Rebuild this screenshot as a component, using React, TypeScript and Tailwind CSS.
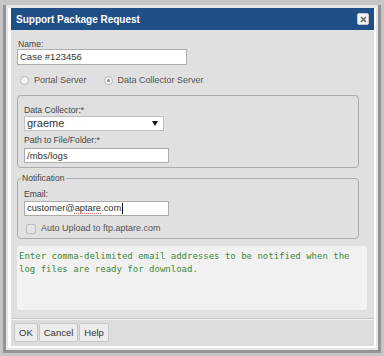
const sans = { fontFamily: '"Liberation Sans", Arial, sans-serif' };

function Radio({ checked, label }: { checked?: boolean; label: string }) {
  return (
    <div className="flex items-center gap-[5px]">
      <span className="flex h-[9px] w-[9px] items-center justify-center rounded-full border border-[#b4b4b4] bg-[#f4f4f4]">
        {checked && <span className="h-[3px] w-[3px] rounded-full bg-[#8a8a8a]" />}
      </span>
      <span className="text-[9px] leading-[12px] text-[#555]">{label}</span>
    </div>
  );
}

function Label({ children }: { children: React.ReactNode }) {
  return <div className="text-[8.6px] leading-[10px] text-[#444]">{children}</div>;
}

function Button({ children }: { children: React.ReactNode }) {
  return (
    <button className="h-[19px] rounded-[2px] border border-[#c8c8c8] bg-[#ececec] px-[4px] text-[9.5px] leading-[17px] text-[#333]">
      {children}
    </button>
  );
}

export default function App() {
  return (
    <div className="h-[356px] w-[384px] bg-[#c6c6c6] px-[3px] pb-[3px] pt-[5px]" style={sans}>
      <div className="flex h-full flex-col border-x-[3px] border-b-[3px] border-[#949494] bg-[#e6e6e6] px-[2px] pb-[2px] pt-[3px]">
        <div className="flex flex-1 flex-col border-b-[2px] border-l-[3px] border-r-[2px] border-white">
          {/* title */}
          <div className="flex h-[22px] items-center justify-between bg-[#1f4f86] pl-[5px] pr-[5px]">
            <span className="text-[10px] font-bold text-white">Support Package Request</span>
            <span className="flex h-[12px] w-[12px] items-center justify-center rounded-[2px] border border-[#c8c8c8] bg-[#f2f2f2]">
              <svg width="7" height="7" viewBox="0 0 7 7">
                <path d="M1 1 L6 6 M6 1 L1 6" stroke="#6a6a6a" strokeWidth="1.6" />
              </svg>
            </span>
          </div>

          {/* body */}
          <div className="flex flex-1 flex-col bg-[#e0e0e0] pb-[8px] pl-[6px] pr-[5px] pt-[9px]">
            <div className="pl-[1px]">
              <Label>Name:</Label>
            </div>
            <div className="h-[16px] w-[170px] border border-[#acacac] bg-white px-[2px] text-[9.5px] leading-[14px] text-[#333]">
              Case #123456
            </div>

            <div className="ml-[3px] mt-[9px] flex items-center gap-[17px]">
              <Radio label="Portal Server" />
              <Radio checked label="Data Collector Server" />
            </div>

            <fieldset className="mt-[9px] h-[73px] w-[342px] rounded-[4px] border border-[#ababab] pl-[6px] pt-[9px]">
              <Label>Data Collector:*</Label>
              <div className="mt-[1px] flex h-[15px] w-[140px] items-center justify-between border border-[#c0c0c0] bg-white pl-[2px] pr-[5px]">
                <span className="text-[11px] leading-[13px] text-[#333]">graeme</span>
                <svg width="6" height="5" viewBox="0 0 6 5">
                  <path d="M0 0 L6 0 L3 5 Z" fill="#111" />
                </svg>
              </div>
              <div className="mt-[4px]">
                <Label>Path to File/Folder:*</Label>
              </div>
              <div className="mt-[3px] h-[15px] w-[145px] border border-[#acacac] bg-white px-[2px] text-[9.5px] leading-[13px] text-[#333]">
                /mbs/logs
              </div>
            </fieldset>

            <fieldset className="mt-[5px] h-[66px] w-[342px] rounded-[4px] border border-[#ababab] pl-[6px]">
              <legend className="ml-[-3px] px-[1px] text-[8.6px] leading-[10px] text-[#444]">Notification</legend>
              <div className="mt-[6px]">
                <Label>Email:</Label>
              </div>
              <div className="mt-[2px] flex h-[15px] w-[145px] items-center border border-[#acacac] bg-white px-[2px] text-[9.3px] leading-[13px] text-[#333]">
                <span>
                  customer@
                  <span className="underline decoration-[#e07070] decoration-dotted decoration-[1px] underline-offset-[2px]">aptare</span>
                  .com
                </span>
                <span className="ml-[1px] h-[11px] w-[1px] bg-black" />
              </div>
              <div className="ml-[2px] mt-[7px] flex items-center gap-[5px]">
                <span className="h-[10px] w-[10px] rounded-[2px] border border-[#bdbdbd] bg-[#e4e4e4]" />
                <span className="text-[9px] leading-[11px] text-[#555]">Auto Upload to ftp.aptare.com</span>
              </div>
            </fieldset>

            <div
              className="mt-[7px] h-[64px] w-[350px] rounded-[2px] bg-[#f1f1f1] px-[2px] pt-[4px] text-[9px] leading-[13px] text-[#3e8a3e]"
              style={{ fontFamily: '"DejaVu Sans Mono", "Liberation Mono", monospace' }}
            >
              Enter comma-delimited email addresses to be notified when the
              <br />
              log files are ready for download.
            </div>
          </div>

          {/* footer */}
          <div className="flex h-[28px] items-center gap-[1px] border-t border-[#c4c4c4] bg-[#dcdcdc] pl-[3px] shadow-[inset_0_1px_0_#f4f4f4]">
            <Button>OK</Button>
            <Button>Cancel</Button>
            <Button>Help</Button>
          </div>
        </div>
      </div>
    </div>
  );
}
